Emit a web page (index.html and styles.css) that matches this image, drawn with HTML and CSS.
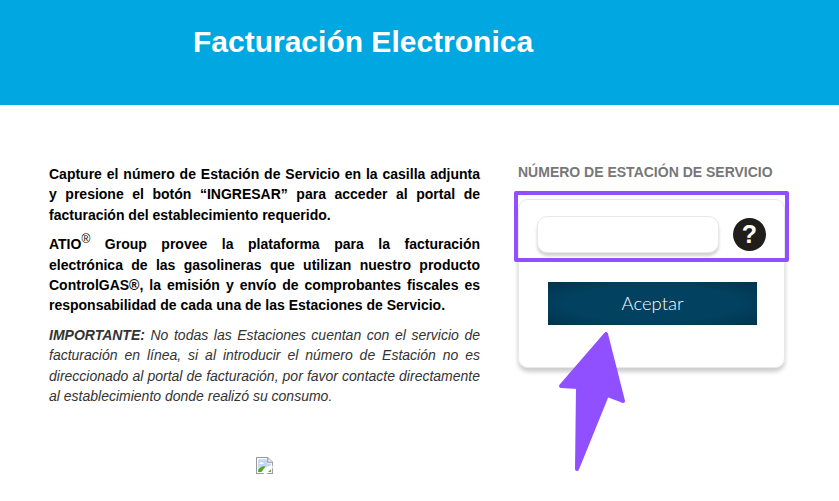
FILE: index.html
```html
<!DOCTYPE html>
<html lang="es">
<head>
    <meta charset="UTF-8">
    <meta name="viewport" content="width=device-width, initial-scale=1.0">
    <title>Facturación Electronica</title>
    <link rel="stylesheet" href="styles.css">
</head>
<body>
    <header class="banner">
        <h1>Facturación Electronica</h1>
    </header>

    <main class="content">
        <section class="intro">
            <p class="strong">Capture el número de Estación de Servicio en la casilla adjunta y presione el botón “INGRESAR” para acceder al portal de facturación del establecimiento requerido.</p>
            <p class="strong">ATIO<sup>®</sup> Group provee la plataforma para la facturación electrónica de las gasolineras que utilizan nuestro producto ControlGAS®, la emisión y envío de comprobantes fiscales es responsabilidad de cada una de las Estaciones de Servicio.</p>
            <p class="note"><b>IMPORTANTE:</b> No todas las Estaciones cuentan con el servicio de facturación en línea, si al introducir el número de Estación no es direccionado al portal de facturación, por favor contacte directamente al establecimiento donde realizó su consumo.</p>
            <div class="broken-img">
                <svg width="17" height="17" viewBox="0 0 16 16">
                    <path d="M.5.5H11L15.500 5v10.500H.5z" fill="#fff" stroke="#9a9a9a"/>
                    <path d="M2 2h8.500v4H14v2L8 10H2z" fill="#c3d8f4"/>
                    <path d="M3 6.500c1-2 3.500-2 4.500 0z" fill="#fff"/>
                    <path d="M2 14v-2c2-3 5-4 7-3l-4 5z" fill="#4ca72f"/>
                    <path d="M11 .5V5h4.500" fill="#e8e8e8" stroke="#9a9a9a"/>
                    <path d="M15 7L7 16h3l6-6z" fill="#fff"/>
                    <path d="M11.500 14l2.500-2.500V14z" fill="#4ca72f"/>
                </svg>
            </div>
        </section>

        <section class="station">
            <h2>NÚMERO DE ESTACIÓN DE SERVICIO</h2>
            <div class="card">
                <div class="input-row">
                    <input type="text" class="station-input">
                    <span class="help">?</span>
                </div>
                <button class="accept">Aceptar</button>
            </div>
        </section>
    </main>

    <!-- annotation drawn over the screenshot -->
    <div class="mark-box"></div>
    <svg class="mark-arrow" width="839" height="501" viewBox="0 0 839 501">
        <path d="M606 334L561 386L578 387L577 469L607 395L623 401Z" fill="#9150ff" stroke="#9150ff" stroke-width="4" stroke-linejoin="round"/>
    </svg>
</body>
</html>
```

FILE: styles.css
```css
body {
    font-family: 'Liberation Sans', Arial, sans-serif;
    margin: 0;
    padding: 0;
    background-color: white;
    color: #000;
    height: 501px;
    overflow: hidden;
}

.banner {
    background-color: #00a7e1;
    height: 105px;
    padding-left: 193px;
    box-sizing: border-box;
}

.banner h1 {
    margin: 0;
    padding-top: 25px;
    color: white;
    font-size: 30px;
    line-height: 34px;
}

.content {
    display: flex;
    padding: 59px 54px 0 49px;
    gap: 38px;
}

.intro {
    width: 431px;
    font-size: 14px;
    line-height: 20.3px;
    text-align: justify;
}

.intro p {
    margin: 0 0 9.5px;
}

.strong {
    font-weight: bold;
}

.intro sup {
    font-size: 12px;
    font-weight: normal;
    line-height: 0;
}

.note {
    font-style: italic;
    color: #333;
}

.broken-img {
    margin: 51px 0 0 207px;
    height: 17px;
}

.station {
    width: 267px;
}

.station h2 {
    margin: 0 0 19px;
    color: #777;
    font-size: 14px;
    line-height: 16px;
    font-weight: bold;
}

.card {
    box-sizing: border-box;
    height: 169px;
    border: 1px solid #e8e8e8;
    border-radius: 10px;
    box-shadow: 0 4px 4px rgba(0,0,0,0.2);
    padding: 16px 18px 0 18px;
}

.input-row {
    display: flex;
    align-items: center;
    gap: 14px;
}

.station-input {
    box-sizing: border-box;
    width: 182px;
    height: 37px;
    border: 1px solid #e8e8e8;
    border-radius: 10px;
    box-shadow: 0 3px 3px rgba(0,0,0,0.18);
    background-color: white;
}

.help {
    flex: 0 0 33px;
    height: 33px;
    border-radius: 50%;
    background-color: #211d1a;
    color: white;
    font-size: 25px;
    font-weight: bold;
    line-height: 33px;
    text-align: center;
}

.accept {
    display: block;
    width: 209px;
    height: 43px;
    margin: 29px 0 0 11px;
    padding: 0 0 2px;
    border: none;
    background: radial-gradient(ellipse at center, #02415f 60%, #01334c 100%);
    color: white;
    font-family: Lato, sans-serif;
    font-size: 18.500px;
    font-weight: 300;
}

.mark-box {
    position: absolute;
    left: 514px;
    top: 191px;
    width: 267px;
    height: 63px;
    border: 4px solid #9150ff;
    border-radius: 2px;
}

.mark-arrow {
    position: absolute;
    left: 0;
    top: 0;
}
```
